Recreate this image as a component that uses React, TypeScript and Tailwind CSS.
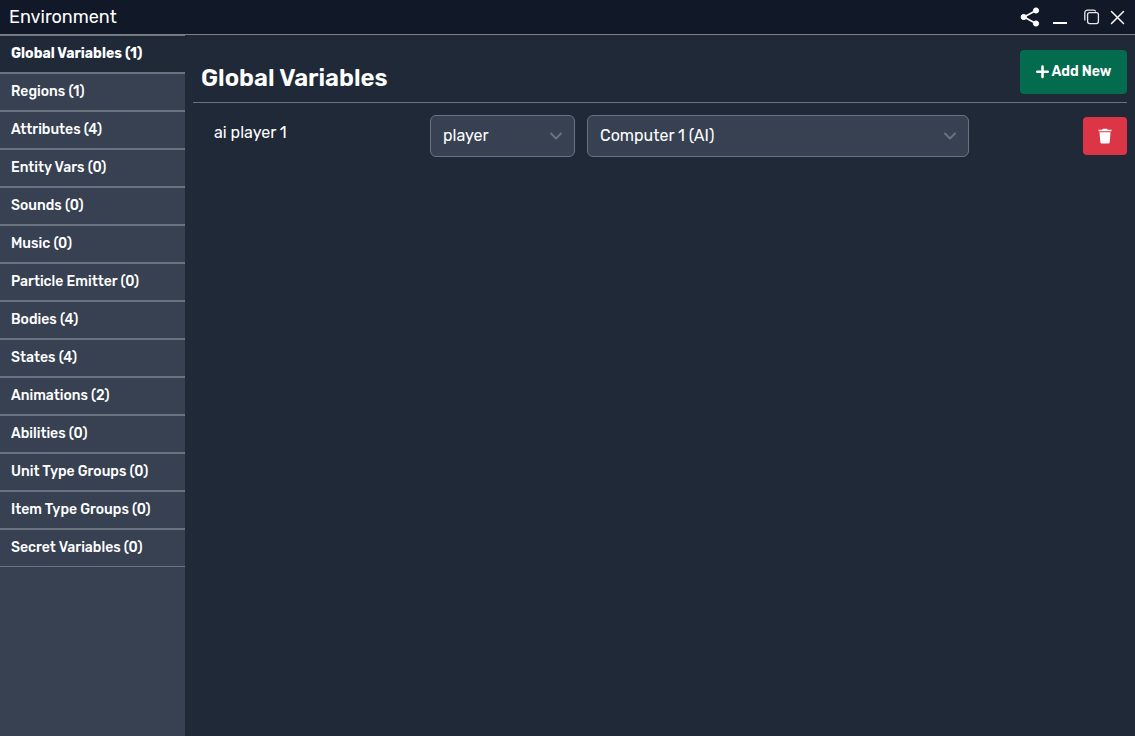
import { ReactNode } from "react";

const sections: [string, number][] = [
  ["Global Variables", 1],
  ["Regions", 1],
  ["Attributes", 4],
  ["Entity Vars", 0],
  ["Sounds", 0],
  ["Music", 0],
  ["Particle Emitter", 0],
  ["Bodies", 4],
  ["States", 4],
  ["Animations", 2],
  ["Abilities", 0],
  ["Unit Type Groups", 0],
  ["Item Type Groups", 0],
  ["Secret Variables", 0],
];

function WindowControls() {
  return (
    <div className="flex items-center">
      <button aria-label="Share" className="flex h-6 w-6 items-center justify-center">
        <svg width="20" height="20" viewBox="0 0 20 20" fill="#fff" stroke="#fff">
          <path d="M16 3.5 4 10l12 6.500" fill="none" strokeWidth="1.700" />
          <circle cx="16" cy="3.500" r="2.600" />
          <circle cx="3.700" cy="10" r="2.600" />
          <circle cx="16" cy="16.500" r="2.600" />
        </svg>
      </button>
      <button aria-label="Minimize" className="ml-2.5 flex h-6 w-4 items-center justify-center">
        <svg width="16" height="20" viewBox="0 0 16 20">
          <path d="M1 16h14" stroke="#fff" strokeWidth="2" />
        </svg>
      </button>
      <button aria-label="Maximize" className="ml-4 flex h-6 w-4 items-center justify-center">
        <svg width="16" height="16" viewBox="0 0 16 16" fill="none" stroke="#e5e7eb" strokeWidth="1.300">
          <rect x="3.600" y="3.600" width="10.800" height="11" rx="2" />
          <path d="M.8 11.500V3.800A2.700 2.700 0 0 1 3.500 1.100h6a2.300 2.300 0 0 1 2.200 1.500" />
        </svg>
      </button>
      <button aria-label="Close" className="ml-1.5 flex h-6 w-6 items-center justify-center">
        <svg width="16" height="16" viewBox="0 0 16 16" fill="none" stroke="#fff" strokeWidth="1.500" strokeLinecap="round">
          <path d="m1.500 2.500 12 12M13.500 2.500l-12 12" />
        </svg>
      </button>
    </div>
  );
}

function Select({ label, className, children }: { label: string; className: string; children: ReactNode }) {
  return (
    <div className={`grid items-center ${className}`}>
      <select
        aria-label={label}
        className="col-start-1 row-start-1 h-[42px] w-full appearance-none rounded-md border border-[#6b7280] bg-[#374151] pr-8 pl-3 text-base text-white"
      >
        {children}
      </select>
      <svg
        className="pointer-events-none col-start-1 row-start-1 mr-3 justify-self-end"
        width="14"
        height="12"
        viewBox="0 0 14 12"
        fill="none"
        stroke="#6b7280"
        strokeWidth="2"
        strokeLinecap="round"
        strokeLinejoin="round"
      >
        <path d="m2 3.500 5 5 5-5" />
      </svg>
    </div>
  );
}

export default function App() {
  return (
    <div className="flex min-h-screen flex-col overflow-hidden bg-[#1f2937] font-[Rubik,Roboto,sans-serif] text-white">
      <header className="flex h-[35px] items-center justify-between border-b border-[#808080] bg-[#111827] pr-[5px] pl-[9px]">
        <h1 className="text-lg leading-6">Environment</h1>
        <WindowControls />
      </header>
      <div className="flex grow">
        <nav className="flex w-[185px] shrink-0 flex-col bg-[#374151]">
          {sections.map(([name, count], i) => (
            <button
              key={name}
              className={`h-[38px] border-y border-[#6b7280] px-[11px] text-left text-sm ${i === 0 ? "bg-[#1f2937] font-bold" : "bg-[#374151] font-medium"}`}
            >
              {name} ({count})
            </button>
          ))}
        </nav>
        <main className="grow px-2 pt-[15px]">
          <div className="flex items-start justify-between border-b border-[#6b7280] pb-2 pl-2">
            <h2 className="mt-3 text-2xl font-semibold">Global Variables</h2>
            <button className="flex h-11 w-[107px] items-center justify-center gap-[3px] rounded bg-[#046c4e] text-sm font-semibold">
              <svg width="13" height="14" viewBox="0 0 13 14">
                <path d="M6.500 1.500v10.400M1.200 6.700h10.600" stroke="#fff" strokeWidth="2.600" strokeLinecap="round" />
              </svg>
              Add New
            </button>
          </div>
          <div className="flex items-start pt-3">
            <span className="w-[237px] pt-[6px] pl-[21px] text-base">ai player 1</span>
            <Select label="Variable type" className="w-[145px]">
              <option>player</option>
            </Select>
            <Select label="Value" className="ml-3 w-[382px]">
              <option>Computer 1 (AI)</option>
            </Select>
            <button
              aria-label="Delete variable"
              className="mt-0.5 ml-auto flex h-[38px] w-11 items-center justify-center rounded bg-[#dc3545]"
            >
              <svg width="14" height="16" viewBox="0 0 14 16" fill="#fff">
                <path d="M.5 1.800h3.700L5 .8h4l.8 1h3.700v1.400H.5zM1.500 4.200h11l-.8 10a1.500 1.500 0 0 1-1.500 1.300H3.800a1.500 1.500 0 0 1-1.500-1.300z" />
              </svg>
            </button>
          </div>
        </main>
      </div>
    </div>
  );
}
